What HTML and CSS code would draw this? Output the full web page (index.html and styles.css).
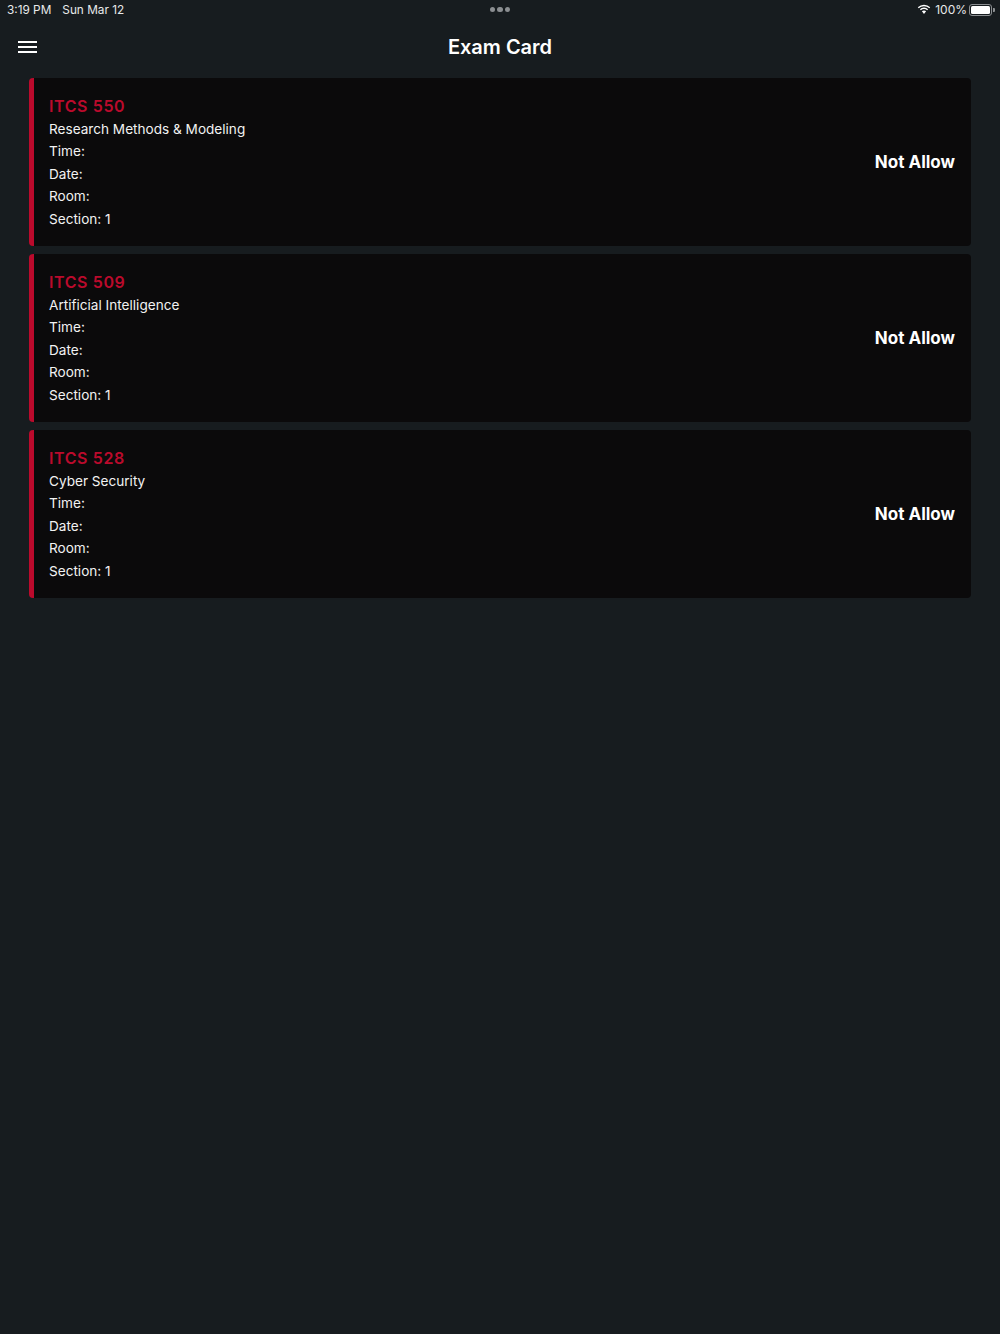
FILE: index.html
```html
<!DOCTYPE html>
<html lang="en">
<head>
    <meta charset="UTF-8">
    <meta name="viewport" content="width=device-width, initial-scale=1.0">
    <title>Exam Card</title>
    <link rel="stylesheet" href="styles.css">
</head>
<body>
    <div class="status-bar">
        <div class="status-left">
            <span>3:19 PM</span>
            <span>Sun Mar 12</span>
        </div>
        <div class="status-dots"><i></i><i></i><i></i></div>
        <div class="status-right">
            <svg class="wifi" width="14" height="11" viewBox="0 0 16 12">
                <path d="M8 2.200c2.300 0 4.400.9 6 2.400l1.100-1.200A10.300 10.300 0 0 0 8 .5 10.300 10.300 0 0 0 .9 3.400L2 4.600a8.700 8.700 0 0 1 6-2.400z" fill="#fff"/>
                <path d="M8 5.500c1.400 0 2.600.5 3.600 1.400l1.100-1.200A7 7 0 0 0 8 3.800a7 7 0 0 0-4.700 1.900l1.100 1.200c1-.9 2.200-1.400 3.600-1.400z" fill="#fff"/>
                <path d="M8 7.100c-1 0-1.800.4-2.400.9L8 11l2.400-3c-.6-.5-1.400-.9-2.400-.9z" fill="#fff"/>
            </svg>
            <span>100%</span>
            <div class="battery"><div class="battery-level"></div></div>
            <div class="battery-cap"></div>
        </div>
    </div>

    <header class="top-bar">
        <button class="menu-btn" aria-label="Menu"><i></i><i></i><i></i></button>
        <h1>Exam Card</h1>
    </header>

    <main class="card-list">
        <section class="exam-card">
            <div class="exam-info">
                <h2>ITCS 550</h2>
                <p>Research Methods &amp; Modeling</p>
                <p>Time:</p>
                <p>Date:</p>
                <p>Room:</p>
                <p>Section: 1</p>
            </div>
            <div class="exam-status">Not Allow</div>
        </section>
        <section class="exam-card">
            <div class="exam-info">
                <h2>ITCS 509</h2>
                <p>Artificial Intelligence</p>
                <p>Time:</p>
                <p>Date:</p>
                <p>Room:</p>
                <p>Section: 1</p>
            </div>
            <div class="exam-status">Not Allow</div>
        </section>
        <section class="exam-card">
            <div class="exam-info">
                <h2>ITCS 528</h2>
                <p>Cyber Security</p>
                <p>Time:</p>
                <p>Date:</p>
                <p>Room:</p>
                <p>Section: 1</p>
            </div>
            <div class="exam-status">Not Allow</div>
        </section>
    </main>
</body>
</html>
```

FILE: styles.css
```css
* {
    box-sizing: border-box;
}
body {
    margin: 0;
    min-height: 1334px;
    background: #171c1f;
    color: #fff;
    font-family: Inter, "Liberation Sans", sans-serif;
}

/* Status bar */
.status-bar {
    display: grid;
    grid-template-columns: 1fr auto 1fr;
    align-items: center;
    height: 19px;
    margin-bottom: 1px;
    padding: 0 5px;
    font-size: 11.8px;
    color: #e8e9ea;
}
.status-left {
    display: flex;
    gap: 11px;
    padding-left: 2px;
}
.status-dots {
    display: flex;
    gap: 2.2px;
}
.status-dots i {
    width: 5.5px;
    height: 5.5px;
    border-radius: 50%;
    background: #8b8e91;
}
.status-right {
    display: flex;
    align-items: center;
    justify-content: flex-end;
    font-size: 12px;
}
.wifi {
    margin-right: 4px;
}
.battery {
    width: 23px;
    height: 12px;
    margin-left: 2px;
    padding: 1px;
    border: 1px solid #8b8e91;
    border-radius: 3px;
}
.battery-level {
    height: 100%;
    background: #fff;
    border-radius: 1.5px;
}
.battery-cap {
    width: 2px;
    height: 4px;
    margin-left: 1px;
    background: #8b8e91;
    border-radius: 0 1px 1px 0;
}

/* Top bar */
.top-bar {
    position: relative;
    display: flex;
    align-items: center;
    justify-content: center;
    height: 54px;
}
.top-bar h1 {
    margin: 0;
    font-size: 20px;
    font-weight: 600;
}
.menu-btn {
    position: absolute;
    left: 18px;
    top: 21px;
    display: flex;
    flex-direction: column;
    gap: 3px;
    padding: 0;
    background: none;
    border: 0;
}
.menu-btn i {
    display: block;
    width: 19px;
    height: 2px;
    background: #fff;
}

/* Cards */
.card-list {
    display: flex;
    flex-direction: column;
    gap: 8px;
    padding: 4px 29px 0;
}
.exam-card {
    display: flex;
    align-items: center;
    justify-content: space-between;
    height: 168px;
    padding: 0 16px 0 15px;
    background: #0b0a0b;
    border-left: 5px solid #bb0a2c;
    border-radius: 4px;
}
.exam-info {
    margin-top: -1px;
}
.exam-info h2 {
    margin: 2px 0 0;
    font-size: 16px;
    line-height: 23px;
    font-weight: 600;
    letter-spacing: 0.6px;
    color: #bb0a2c;
}
.exam-info p {
    margin: 0;
    font-size: 13.6px;
    line-height: 22.5px;
    color: #f2f2f2;
}
.exam-status {
    font-size: 17px;
    line-height: 22px;
    font-weight: 700;
}
```
